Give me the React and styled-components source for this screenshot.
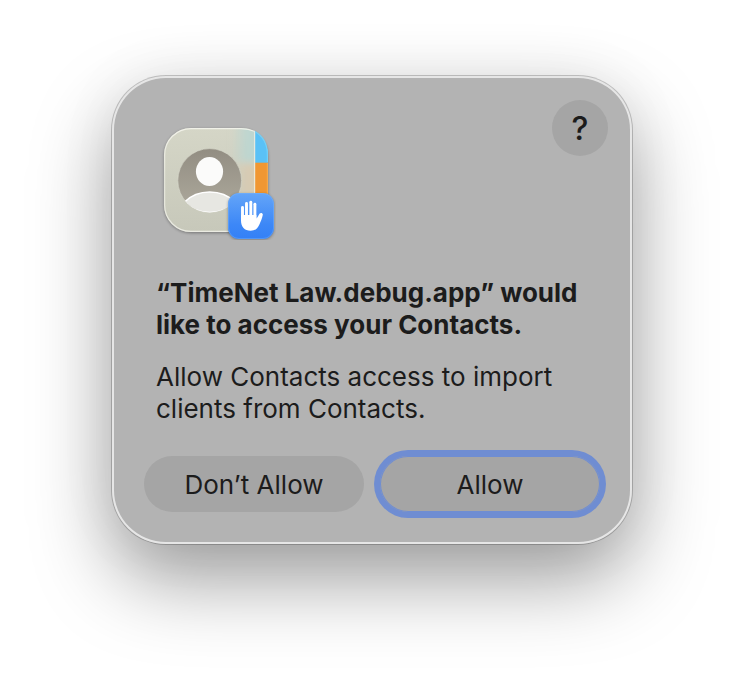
import React from 'react';
import styled, { createGlobalStyle, css } from 'styled-components';

const GlobalStyle = createGlobalStyle`
    *,
    *::before,
    *::after {
        box-sizing: border-box;
    }

    body {
        margin: 0;
        background-color: #ffffff;
        color: #1c1c1c;
        font-family: Inter, 'Liberation Sans', sans-serif;
    }
`;

const Page = styled.main`
    min-height: 100vh;
    padding: 76px 16px 148px;
    overflow: hidden;
`;

const Dialog = styled.section`
    max-width: 520px;
    margin: 0 auto;
    padding: 24px 24px 32px 32px;
    border-radius: 54px;
    background-color: #b3b3b3;
    box-shadow:
        inset 0 0 0 2px #e6e6e6,
        0 0 0 1px rgba(0, 0, 0, 0.2),
        0 36px 80px rgba(0, 0, 0, 0.38),
        0 0 64px rgba(0, 0, 0, 0.05);
`;

const DialogHeader = styled.header`
    display: flex;
    justify-content: space-between;
    align-items: flex-start;
    padding-left: 12px;
`;

const AppIcon = styled.svg`
    width: 120px;
    height: 120px;
    margin-top: 20px;
`;

const DialogText = styled.div`
    padding: 37px 12px 31px;
    font-size: 26px;
    line-height: 32px;
`;

const Title = styled.h1`
    margin: 0 0 20px;
    font-size: inherit;
    font-weight: 700;
`;

const Message = styled.p`
    margin: 0;
`;

const Actions = styled.div`
    display: grid;
    grid-template-columns: 1fr 1fr;
    gap: 16px;
    padding-right: 8px;
`;

const Button = styled.button`
    height: 56px;
    padding: 0;
    border: none;
    border-radius: 28px;
    background-color: #a5a5a5;
    color: inherit;
    font-family: inherit;
    font-size: 26px;
    cursor: pointer;

    ${({ $primary }) =>
        $primary &&
        css`
            box-shadow:
                inset 0 0 0 1px #6f8dd2,
                0 0 0 6px #6f8dd2;
        `}
`;

const HelpButton = styled(Button)`
    width: 56px;
    font-size: 32px;
    font-weight: 500;
`;

function ContactsIcon() {
    return (
        <AppIcon viewBox="0 0 120 120" role="img" aria-label="Contacts">
            <defs>
                <linearGradient id="cover" x1="0" y1="0" x2="0" y2="1">
                    <stop offset="0" stopColor="#d5d6c7" />
                    <stop offset="1" stopColor="#c7c8ba" />
                </linearGradient>
                <linearGradient id="rim" x1="0" y1="0" x2="0" y2="1">
                    <stop offset="0" stopColor="#f6f6ee" />
                    <stop offset="0.5" stopColor="#e6e7dc" />
                    <stop offset="1" stopColor="#f1f1e9" />
                </linearGradient>
                <linearGradient id="disc" x1="0" y1="0" x2="0" y2="1">
                    <stop offset="0" stopColor="#928d82" />
                    <stop offset="1" stopColor="#aeaa9d" />
                </linearGradient>
                <linearGradient id="blueGlow">
                    <stop offset="0" stopColor="#b9d6d2" stopOpacity="0" />
                    <stop offset="0.6" stopColor="#b9d6d2" stopOpacity="0.9" />
                    <stop offset="1" stopColor="#c3d6ce" />
                </linearGradient>
                <linearGradient id="orangeGlow">
                    <stop offset="0" stopColor="#d8cab0" stopOpacity="0" />
                    <stop offset="0.6" stopColor="#d8cab0" stopOpacity="0.9" />
                    <stop offset="1" stopColor="#d8cdb6" />
                </linearGradient>
                <linearGradient id="badge" x1="0" y1="0" x2="0" y2="1">
                    <stop offset="0" stopColor="#64a5f8" />
                    <stop offset="0.7" stopColor="#3c87f7" />
                    <stop offset="1" stopColor="#3480f6" />
                </linearGradient>
                <clipPath id="iconShape">
                    <rect x="8" y="8" width="104" height="104" rx="27" />
                </clipPath>
                <clipPath id="discShape">
                    <circle cx="53.7" cy="60.5" r="32" />
                </clipPath>
                <filter id="soft" x="-20%" y="-20%" width="140%" height="140%">
                    <feGaussianBlur stdDeviation="1.6" />
                </filter>
                <filter id="glow" x="-40%" y="-40%" width="180%" height="180%">
                    <feGaussianBlur stdDeviation="3" />
                </filter>
            </defs>

            {/* address book */}
            <rect x="8" y="9" width="104" height="104" rx="27" fill="#000" opacity="0.35" filter="url(#soft)" />
            <g clipPath="url(#iconShape)">
                <rect x="8" y="8" width="104" height="104" fill="url(#cover)" />
                <g filter="url(#glow)">
                    <rect x="76" y="2" width="28" height="40" fill="url(#blueGlow)" />
                    <rect x="76" y="44" width="28" height="40" fill="url(#orangeGlow)" />
                </g>
                <rect x="99" y="8" width="13" height="35" fill="#5ac1f6" />
                <rect x="99" y="42.7" width="13" height="36" fill="#f09733" />
                <rect x="98.2" y="8" width="1" height="104" fill="#efeee2" />
            </g>
            <path
                d="M99 11.5 C94.5 9.5 90 8.6 85 8.6 H35 C20.4 8.6 8.6 20.4 8.6 35 V85 C8.6 99.6 20.4 111.4 35 111.4 H75"
                fill="none"
                stroke="url(#rim)"
                strokeWidth="1.3"
                opacity="0.85"
            />
            <path d="M99 11.5 C107 16 111.4 25 111.4 35 V42" fill="none" stroke="#6fd0fa" strokeWidth="1.2" />
            <path d="M111.4 43 V76" fill="none" stroke="#f5a94a" strokeWidth="1.2" />

            {/* person */}
            <circle cx="53.7" cy="60.5" r="32" fill="url(#disc)" />
            <circle cx="53.7" cy="60.5" r="31.9" fill="none" stroke="#dedfd2" strokeWidth="0.6" />
            <ellipse cx="53.5" cy="51.5" rx="13.6" ry="14.6" fill="#fbfbfa" />
            <g clipPath="url(#discShape)">
                <path
                    d="M28.5 82 C35 75.5 43.5 72 53.7 72 C64 72 72.5 75.5 79 82 C72 89.5 63 92.4 53.7 92.4 C44.5 92.4 35.5 89.5 28.5 82 Z"
                    fill="#e7e7e2"
                    stroke="#ffffff"
                    strokeWidth="1.4"
                />
            </g>

            {/* privacy badge */}
            <rect x="72" y="74" width="46" height="46" rx="11" fill="#000" opacity="0.3" filter="url(#soft)" />
            <rect x="72" y="73" width="46" height="46" rx="11" fill="url(#badge)" />
            <rect x="72.5" y="73.5" width="45" height="45" rx="10.5" fill="none" stroke="#7cb6fb" strokeOpacity="0.4" />
            <g fill="none" stroke="#ffffff" strokeWidth="2.9" strokeLinecap="round">
                <path d="M86.5 87.5 V100" />
                <path d="M90.5 83.5 V98" />
                <path d="M94.8 82.2 V98" />
                <path d="M98.9 84.2 V98" />
            </g>
            <path
                d="M85 95 H100.4 V98.6 C101.6 97.6 102.6 94.8 103.7 93.5 C104.8 92.4 107 93 106.8 94.8 C106.2 98.2 104.8 101.4 103.4 104.4 C101.5 108.6 98.8 110.7 94.6 110.7 C88.5 110.7 85 106.8 85 100.5 Z"
                fill="#ffffff"
            />
        </AppIcon>
    );
}

function App() {
    return (
        <>
            <GlobalStyle />
            <Page>
                <Dialog role="alertdialog" aria-labelledby="title" aria-describedby="message">
                    <DialogHeader>
                        <ContactsIcon />
                        <HelpButton type="button">?</HelpButton>
                    </DialogHeader>
                    <DialogText>
                        <Title id="title">“TimeNet Law.debug.app” would like to access your Contacts.</Title>
                        <Message id="message">Allow Contacts access to import clients from Contacts.</Message>
                    </DialogText>
                    <Actions>
                        <Button type="button">Don’t Allow</Button>
                        <Button type="button" $primary>
                            Allow
                        </Button>
                    </Actions>
                </Dialog>
            </Page>
        </>
    );
}

export default App;
